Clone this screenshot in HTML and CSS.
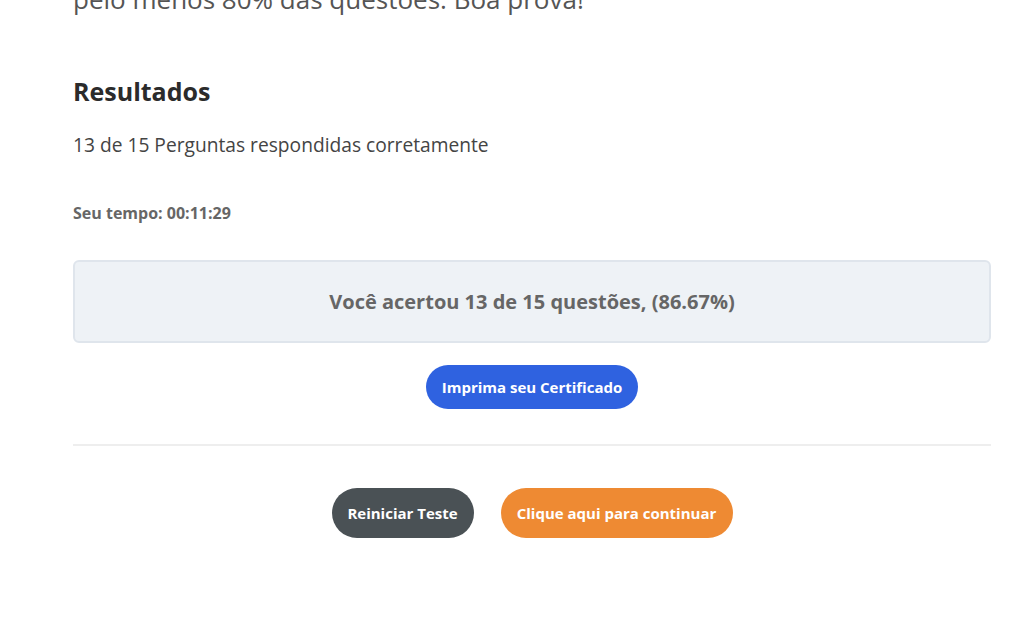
FILE: index.html
```html
<!DOCTYPE html>
<html lang="pt">
<head>
    <meta charset="UTF-8">
    <meta name="viewport" content="width=device-width, initial-scale=1.0">
    <title>Resultados</title>
    <link rel="stylesheet" href="styles.css">
</head>
<body>
    <div class="quiz">
        <p class="intro">pelo menos 80% das questões. Boa prova!</p>

        <div class="results">
            <h2 class="results-title">Resultados</h2>
            <p class="results-count">13 de 15 Perguntas respondidas corretamente</p>
            <p class="results-time">Seu tempo: 00:11:29</p>

            <div class="results-box">Você acertou 13 de 15 questões, (86.67%)</div>

            <div class="cert-row">
                <button class="btn btn-blue">Imprima seu Certificado</button>
            </div>

            <hr class="divider">

            <div class="actions">
                <button class="btn btn-dark">Reiniciar Teste</button>
                <button class="btn btn-orange">Clique aqui para continuar</button>
            </div>
        </div>
    </div>
</body>
</html>
```

FILE: styles.css
```css
body {
    margin: 0;
    background: #fff;
    font-family: "Open Sans", "Noto Sans", sans-serif;
    color: #333;
}
.quiz {
    width: 918px;
    margin: -19px 0 0 73px;
}
.intro {
    margin: 0;
    font-size: 26px;
    line-height: 36px;
    color: #555;
}
.results-title {
    margin: 57px 0 0;
    font-size: 25px;
    line-height: 34px;
    font-weight: 700;
    color: #2b2b2b;
}
.results-count {
    margin: 24px 0 0;
    font-size: 19.2px;
    line-height: 26px;
    color: #444;
}
.results-time {
    margin: 45px 0 0;
    font-size: 16px;
    line-height: 20px;
    font-weight: 700;
    color: #666;
}
.results-box {
    margin-top: 37px;
    height: 79px;
    display: flex;
    align-items: center;
    justify-content: center;
    background: #eef2f6;
    border: 2px solid #dfe5ec;
    border-radius: 6px;
    font-size: 20px;
    font-weight: 700;
    color: #666;
}
.cert-row {
    display: flex;
    justify-content: center;
    margin-top: 22px;
}
.btn {
    border: none;
    border-radius: 25px;
    font-family: inherit;
    font-size: 15px;
    font-weight: 700;
    color: #fff;
    padding: 0 12px;
    cursor: pointer;
}
.btn-blue {
    height: 44px;
    width: 212px;
    background: #2f62e0;
}
.divider {
    margin: 35px 0 0;
    border: none;
    border-top: 2px solid #eeeeee;
}
.actions {
    display: flex;
    justify-content: center;
    gap: 27px;
    margin-top: 42px;
}
.btn-dark {
    height: 50px;
    width: 142px;
    background: #4a5155;
}
.btn-orange {
    height: 50px;
    width: 232px;
    background: #ee8a33;
}
```
